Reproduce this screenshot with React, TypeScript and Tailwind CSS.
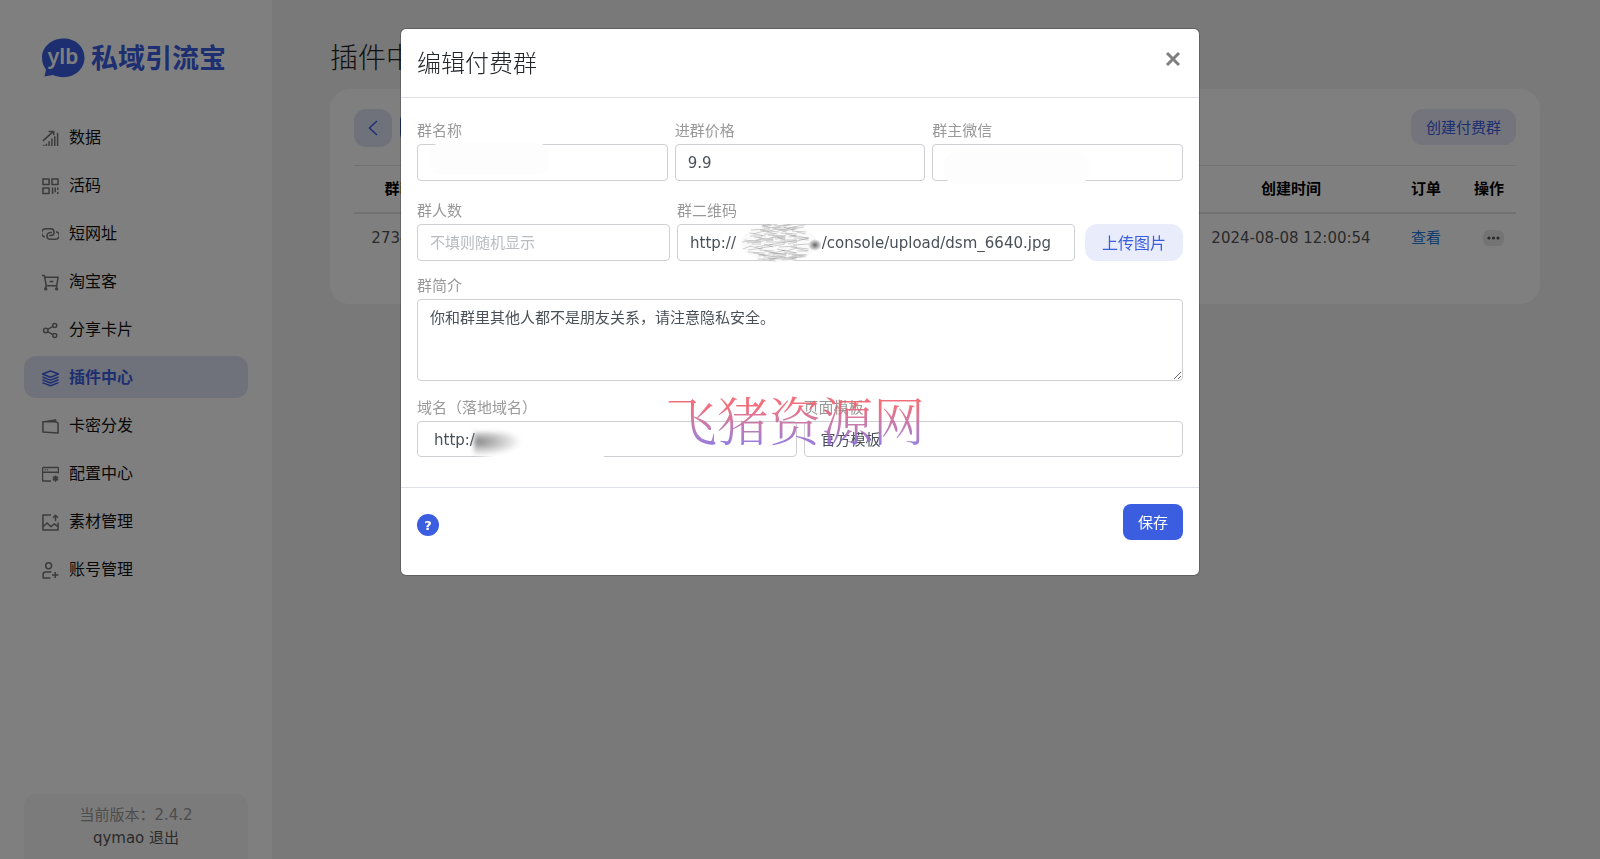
import type { ReactNode } from "react";

type MenuItem = {
  label: string;
  icon: ReactNode;
  active?: boolean;
};

function Icon({ children }: { children: ReactNode }) {
  return (
    <svg
      viewBox="0 0 18 18"
      className="size-[17px] shrink-0"
      fill="none"
      stroke="currentColor"
      strokeWidth="1.6"
      strokeLinejoin="round"
      aria-hidden="true"
    >
      {children}
    </svg>
  );
}

const menu: MenuItem[] = [
  {
    label: "数据",
    icon: (
      <Icon>
        <path d="M1 11.5 11.500 2M7 1.600h5.500v4M16.500 3v14M13.500 6.500v10.500M10.500 9v8M7.500 12v5M4.700 14.500V17M1.800 15.500V17" />
      </Icon>
    )
  },
  {
    label: "活码",
    icon: (
      <Icon>
        <path d="M1 1h6.500v6H1zM10.500 1H17v6h-6.500zM1 10.500h6.500v6H1zM11.200 10v7M16.700 10v2.800M16.700 14.500V17M14 10v5" />
      </Icon>
    )
  },
  {
    label: "短网址",
    icon: (
      <Icon>
        <path d="M3 11.500a3.700 3.700 0 0 1 1.500-8.500h5.500a3.600 3.600 0 0 1 0 7H7.500M15 6a3.700 3.700 0 0 1-1.500 8h-5.500a3.600 3.600 0 0 1 0-7H10.500" />
      </Icon>
    )
  },
  {
    label: "淘宝客",
    icon: (
      <Icon>
        <path d="M0 1.500h2.500L4.500 12.500h11L17 3.500H3M4.500 12.500l-1 2.500M15.500 12.500v2M8 8h4" />
        <circle cx="4" cy="15.800" r="1" />
        <circle cx="15.500" cy="15.800" r="1" />
      </Icon>
    )
  },
  {
    label: "分享卡片",
    icon: (
      <Icon>
        <circle cx="4" cy="9" r="2.300" />
        <circle cx="13.500" cy="3.700" r="2.100" />
        <circle cx="13.500" cy="14.300" r="2.100" />
        <path d="m6 7.900 5.600-3.200M6 10.100l5.600 3.200" />
      </Icon>
    )
  },
  {
    label: "插件中心",
    active: true,
    icon: (
      <Icon>
        <path d="m9 1 8.500 3.300L9 7.600.500 4.300zM.500 7.400 9 10.700l8.500-3.300M.500 10.400 9 13.700l8.500-3.300M.500 13.400 9 16.700l8.500-3.300" />
      </Icon>
    )
  },
  {
    label: "卡密分发",
    icon: (
      <Icon>
        <path d="M1 4h13.500l2.500 1.500V16L1 14.700zM4 3.800 14.500 2v2" />
      </Icon>
    )
  },
  {
    label: "配置中心",
    icon: (
      <Icon>
        <path d="M9.500 16h-8a1 1 0 0 1-1-1V2.500a1 1 0 0 1 1-1h15a1 1 0 0 1 1 1V8M.500 6.500h17M3 4h1M5.500 4h1" />
        <circle cx="14.300" cy="13.300" r="1.600" />
        <path d="M14.300 10v6.600M11.400 11.600l5.800 3.300M17.200 11.600l-5.800 3.300" />
      </Icon>
    )
  },
  {
    label: "素材管理",
    icon: (
      <Icon>
        <path d="M9.500 1H1v16h16V9M1 13.500l4.500-4 4 4 3.500-3 4 3M14.300 7.500V1.500M11.700 4l2.600-2.600L17 4" />
      </Icon>
    )
  },
  {
    label: "账号管理",
    icon: (
      <Icon>
        <circle cx="7" cy="4" r="3.100" />
        <path d="M9 17H1.200v-4a2.500 2.500 0 0 1 2.500-2.500H10M14 10.500V17M10.700 13.700h6.600" />
      </Icon>
    )
  }
];

const inputClass =
  "h-[37px] w-full rounded border border-[#ced0d3] bg-white px-3 text-[15px] text-[#495057] outline-none placeholder:text-[#b9bcc0]";

const selectClass =
  "block h-9 w-full appearance-none rounded border border-[#ced0d3] bg-white px-4 pt-0.5 text-[15px] text-[#495057] outline-none";

function Field({
  id,
  label,
  className,
  children
}: {
  id: string;
  label: string;
  className?: string;
  children: ReactNode;
}) {
  return (
    <div className={className}>
      <label htmlFor={id} className="mb-px block text-[15px] leading-6 text-[#999]">
        {label}
      </label>
      {children}
    </div>
  );
}

function Logo() {
  return (
    <a href="#" className="ml-[17px] flex items-center gap-1.5 text-[#3b5ee0]">
      <svg viewBox="0 0 44 40" className="h-10 w-11" aria-hidden="true">
        <path
          d="M22.500.500C10.500.500 1 9 1 19.500c0 5 1.500 9 4 12L3.500 38.500l8.500-1.500c3 1.400 6.500 2.200 10.500 2.200 12 0 21-8.700 21-19.700S34.500.500 22.500.500z"
          fill="currentColor"
        />
        <text
          x="22"
          y="26"
          textAnchor="middle"
          fill="#fff"
          className="font-['Noto_Sans',sans-serif] text-[21px] font-semibold"
        >
          ylb
        </text>
      </svg>
      <span className="pt-0.5 text-[27px] leading-10 font-bold">私域引流宝</span>
    </a>
  );
}

function Sidebar() {
  return (
    <aside className="flex w-[272px] shrink-0 flex-col bg-white px-6 pt-[37px]">
      <Logo />
      <nav className="mt-[37px] flex flex-col gap-1.5">
        {menu.map((item) => (
          <a
            key={item.label}
            href="#"
            className={
              item.active
                ? "flex h-[42px] items-center gap-2.5 rounded-xl bg-[#e0e5f6] px-[18px] pt-0.5 text-base font-bold text-[#3b5ee0]"
                : "flex h-[42px] items-center gap-2.5 px-[18px] pt-0.5 text-base text-[#111]"
            }
          >
            <span className={item.active ? "" : "text-[#777]"}>{item.icon}</span>
            {item.label}
          </a>
        ))}
      </nav>
      <div className="mt-auto rounded-t-xl bg-[#f7f7f7] pt-[10px] pb-[9px] text-center text-[15px] leading-[23px] text-[#999]">
        <p>当前版本：2.4.2</p>
        <p className="text-[#555]">
          qymao <a href="#">退出</a>
        </p>
      </div>
    </aside>
  );
}

function PluginPage() {
  return (
    <main className="min-w-0 flex-1 bg-[#f2f2f2] pt-9 pr-[60px] pl-[58px]">
      <h1 className="text-[28px] leading-[46px] font-light text-[#222]">插件中心</h1>
      <section className="mt-[7px] h-[215px] rounded-[20px] bg-white px-6 pt-5">
        <div className="flex items-start gap-2">
          <button
            type="button"
            aria-label="返回"
            className="grid size-[38px] place-items-center rounded-xl bg-[#e0e5f6] text-[#3b5ee0]"
          >
            <svg viewBox="0 0 10 16" className="h-4 w-2.5" fill="none" stroke="currentColor" strokeWidth="1.5" aria-hidden="true">
              <path d="M9 1 1.500 8 9 15" />
            </svg>
          </button>
          <button type="button" className="h-9 rounded-xl bg-[#3b5ee0] px-4 text-[15px] text-white">
            付费群
          </button>
          <button
            type="button"
            className="ml-auto h-9 rounded-xl bg-[#e6e8f8] px-[15px] pt-0.5 text-[15px] text-[#3b5ee0]"
          >
            创建付费群
          </button>
        </div>
        <table className="mt-[18px] w-full table-fixed text-center text-[15px]">
          <thead>
            <tr className="h-[47px] border-t border-b-2 border-t-[#dee2e6] border-b-[#dee2e6] text-black">
              <th className="w-[92px] font-bold">群id</th>
              <th />
              <th className="w-[198px] font-bold">创建时间</th>
              <th className="w-[72px] font-bold">订单</th>
              <th className="w-[54px] font-bold">操作</th>
            </tr>
          </thead>
          <tbody>
            <tr className="h-[50px] text-[#555]">
              <td>273412</td>
              <td />
              <td className="whitespace-nowrap">2024-08-08 12:00:54</td>
              <td>
                <a href="#" className="text-[#1c7ce0]">
                  查看
                </a>
              </td>
              <td>
                <button
                  type="button"
                  aria-label="更多操作"
                  className="ml-2 inline-flex h-4 w-[21px] items-center justify-center rounded-md bg-[#e9e9e9] align-middle text-[#555]"
                >
                  <svg viewBox="0 0 13 4" className="h-1 w-[13px]" fill="currentColor" aria-hidden="true">
                    <circle cx="2" cy="2" r="1.600" />
                    <circle cx="6.500" cy="2" r="1.600" />
                    <circle cx="11" cy="2" r="1.600" />
                  </svg>
                </button>
              </td>
            </tr>
          </tbody>
        </table>
      </section>
    </main>
  );
}

function Smudge({ className }: { className: string }) {
  return (
    <div className={className}>
      <div className="h-full w-full rounded-xl bg-[#fdfdfe]" />
    </div>
  );
}

// hatching over the hidden host name
function Scribble() {
  const strokes = Array.from({ length: 90 }, (_, i) => {
    const y = 1 + ((i * 13) % 36);
    const reach = 38 * Math.sqrt(Math.max(0.1, 1 - ((y - 19) / 20) ** 2));
    const x = 42 - reach + ((i * 29) % 60) * (reach / 38);
    return { x, y, length: 8 + ((i * 7) % 12), slope: ((i * 5) % 7) - 3 };
  });

  return (
    <svg viewBox="0 0 84 38" className="absolute top-[25px] left-[60px] h-[38px] w-[84px]" aria-hidden="true">
      <defs>
        <radialGradient id="scribble-spot">
          <stop offset="0" stopColor="#666" />
          <stop offset="1" stopColor="#666" stopOpacity="0" />
        </radialGradient>
      </defs>
      <ellipse cx="42" cy="19" rx="38" ry="19" fill="#fafafa" />
      <ellipse cx="78" cy="21" rx="7" ry="6" fill="url(#scribble-spot)" />
      {strokes.map((s, i) => (
        <path
          key={i}
          d={`M${s.x} ${s.y}l${s.length} ${-s.slope}`}
          stroke="#888"
          strokeWidth="0.8"
          opacity="0.5"
        />
      ))}
    </svg>
  );
}

function EditGroupModal() {
  return (
    <div
      role="dialog"
      aria-modal="true"
      aria-labelledby="modal-title"
      className="relative mx-auto mt-7 w-full max-w-[800px] rounded-md border border-black/20 bg-white bg-clip-padding"
    >
      <header className="flex h-[69px] items-start justify-between border-b border-[#dee2e6] px-4 pt-4">
        <h2 id="modal-title" className="text-2xl leading-[38px] font-light text-[#212529]">
          编辑付费群
        </h2>
        <button type="button" aria-label="关闭" className="mt-1.5 mr-0.5 grid size-4 place-items-center text-[#7f7f7f]">
          <svg viewBox="0 0 16 16" className="size-4" fill="none" stroke="currentColor" strokeWidth="3" aria-hidden="true">
            <path d="m2 2 12 12M14 2 2 14" />
          </svg>
        </button>
      </header>

      <form>
        <div className="px-4 pt-[21px] pb-[30px]">
          <div className="flex gap-[7px]">
            <Field id="name" label="群名称" className="relative flex-1">
              <input id="name" className={inputClass} />
              <Smudge className="absolute top-[24px] left-3 h-8 w-[120px]" />
            </Field>
            <Field id="price" label="进群价格" className="flex-1">
              <input id="price" defaultValue="9.9" className={inputClass} />
            </Field>
            <Field id="wechat" label="群主微信" className="relative flex-1">
              <input id="wechat" className={inputClass} />
              <Smudge className="absolute top-[33px] left-3 h-8 w-[145px]" />
            </Field>
          </div>

          <div className="mt-[18px] flex items-end gap-[7px]">
            <Field id="count" label="群人数" className="w-[253px]">
              <input id="count" placeholder="不填则随机显示" className={inputClass} />
            </Field>
            <Field id="qrcode" label="群二维码" className="relative flex-1">
              <input
                id="qrcode"
                defaultValue="http://                  /console/upload/dsm_6640.jpg"
                className={inputClass}
              />
              <Scribble />
            </Field>
            <button
              type="button"
              className="ml-[3px] h-[37px] w-[98px] rounded-xl bg-[#e9edfb] pt-0.5 text-base text-[#3b5ee0]"
            >
              上传图片
            </button>
          </div>

          <Field id="intro" label="群简介" className="mt-[13px]">
            <textarea
              id="intro"
              defaultValue="你和群里其他人都不是朋友关系，请注意隐私安全。"
              className="block h-[82px] w-full rounded border border-[#ced0d3] px-3 py-[7px] text-[15px] leading-[22px] text-[#495057] outline-none"
            />
          </Field>

          <div className="mt-[15px] flex gap-[7px]">
            <Field id="domain" label="域名（落地域名）" className="relative flex-1">
              <select id="domain" className={selectClass}>
                <option>http:/</option>
              </select>
              <div className="absolute top-[33px] left-[57px] h-8 w-[130px] bg-linear-to-r from-transparent via-white via-15% to-white" />
              <div className="absolute top-[36px] left-[57px] h-6 w-12 bg-radial-[at_8%_40%] from-[#888] to-transparent to-70% blur-[2px]" />
            </Field>
            <Field id="template" label="页面模板" className="flex-1">
              <select id="template" className={selectClass}>
                <option>官方模板</option>
              </select>
            </Field>
          </div>
        </div>

        <footer className="flex h-[88px] items-start justify-between border-t border-[#dee2e6] px-4 pt-4">
          <button
            type="button"
            aria-label="帮助"
            className="mt-2.5 grid size-[22px] place-items-center rounded-full bg-[#3b5ee0] text-[13px] leading-none font-bold text-white"
          >
            ?
          </button>
          <button type="submit" className="h-9 w-[60px] rounded-lg bg-[#3b5ee0] pt-0.5 text-[15px] text-white">
            保存
          </button>
        </footer>
      </form>

      <p className="pointer-events-none absolute top-[359px] left-[264px] bg-linear-to-b from-[#f0606e] from-25% to-[#8a6ddb] to-80% bg-clip-text font-['Liberation_Serif','Noto_Serif_CJK_SC','Noto_Sans_CJK_SC',serif] text-[52px] leading-[72px] font-light whitespace-nowrap text-transparent opacity-90">
        飞猪资源网
      </p>
    </div>
  );
}

export default function App() {
  return (
    <div className="min-h-screen font-['DejaVu_Sans','Noto_Sans_CJK_SC',sans-serif]">
      <div className="flex min-h-screen">
        <Sidebar />
        <PluginPage />
      </div>
      <div className="fixed inset-0 overflow-y-auto bg-black/50">
        <EditGroupModal />
      </div>
    </div>
  );
}
